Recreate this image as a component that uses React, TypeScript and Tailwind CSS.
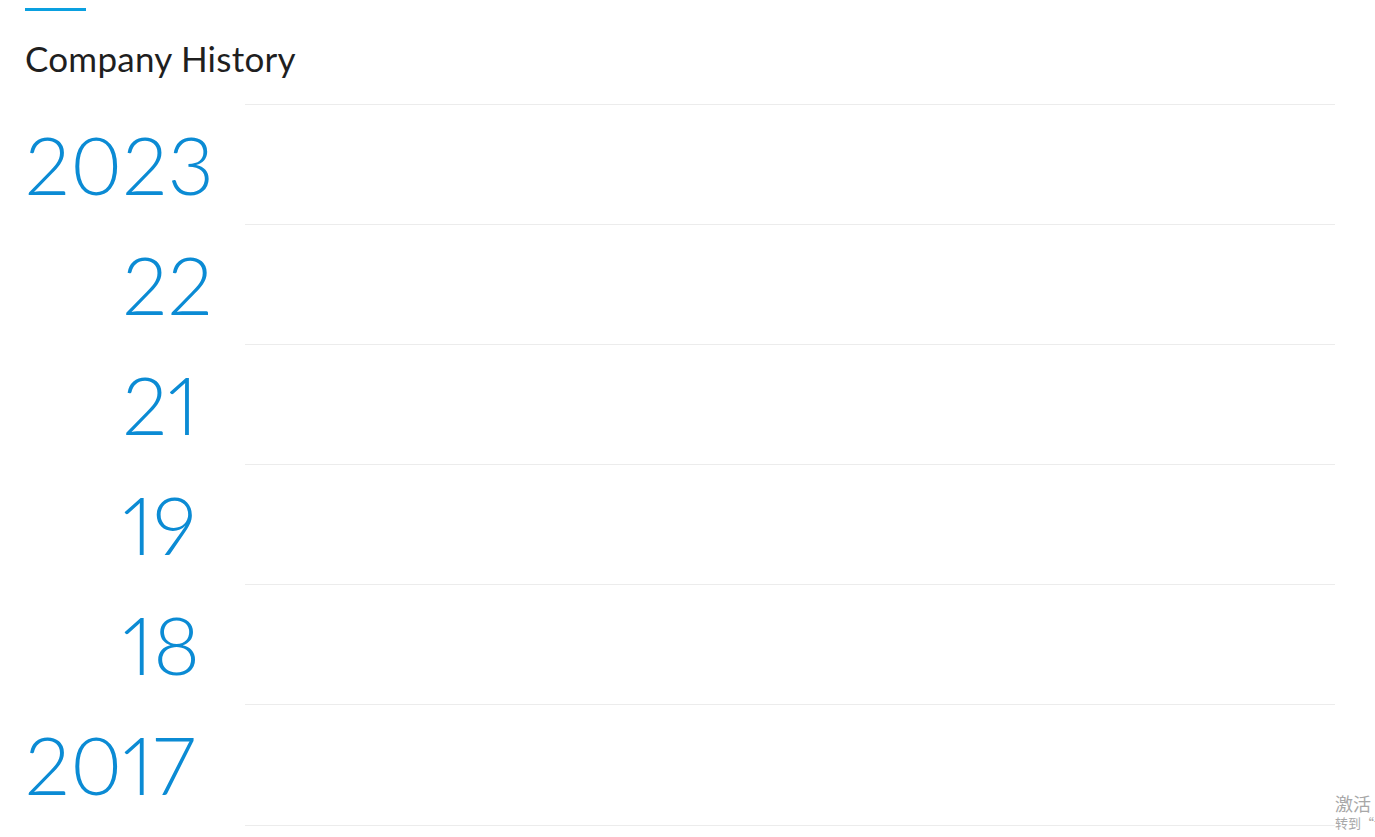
const years = [
  { prefix: '20', suffix: '23', showPrefix: true },
  { prefix: '20', suffix: '22', showPrefix: false },
  { prefix: '20', suffix: '21', showPrefix: false },
  { prefix: '20', suffix: '19', showPrefix: false },
  { prefix: '20', suffix: '18', showPrefix: false },
  { prefix: '20', suffix: '17', showPrefix: true },
];

export default function App() {
  return (
    <div className="relative h-[837px] w-full overflow-hidden bg-white font-['Lato',sans-serif]">
      <section className="pl-[25px] pr-[40px] pt-[8px]">
        <div className="h-[3px] w-[61px] bg-[#0aa0e0]" />
        <h2 className="mt-[27px] mb-[26px] text-[35px] leading-[40px] font-normal tracking-[0.25px] text-[#1f1f1f]">
          Company History
        </h2>

        <div className="flex flex-col">
          {years.map((year, i) => (
            <div
              key={i}
              className={`flex ${i === years.length - 1 ? 'h-[122px]' : 'h-[120px]'}`}
            >
              <div className="w-[220px] shrink-0 pt-[20px] text-[80px] leading-[80px] font-light proportional-nums tracking-[0.5px] text-[#0b8bd4]">
                <span className={year.showPrefix ? '' : 'text-transparent'}>{year.prefix}</span>
                {year.suffix}
              </div>
              <div
                className={`flex-1 border-t border-[#ececec] ${
                  i === years.length - 1 ? 'border-b' : ''
                }`}
              />
            </div>
          ))}
        </div>
      </section>

      {/* activation watermark */}
      <div className="absolute left-[1335px] top-[792px] whitespace-nowrap font-['Noto_Sans_CJK_SC',sans-serif] text-[#a8a8a8]">
        <div className="text-[18px] leading-[22px]">激活 Windows</div>
        <div className="text-[13px] leading-[18px]">转到“设置”以激活 Windows。</div>
      </div>
    </div>
  );
}
